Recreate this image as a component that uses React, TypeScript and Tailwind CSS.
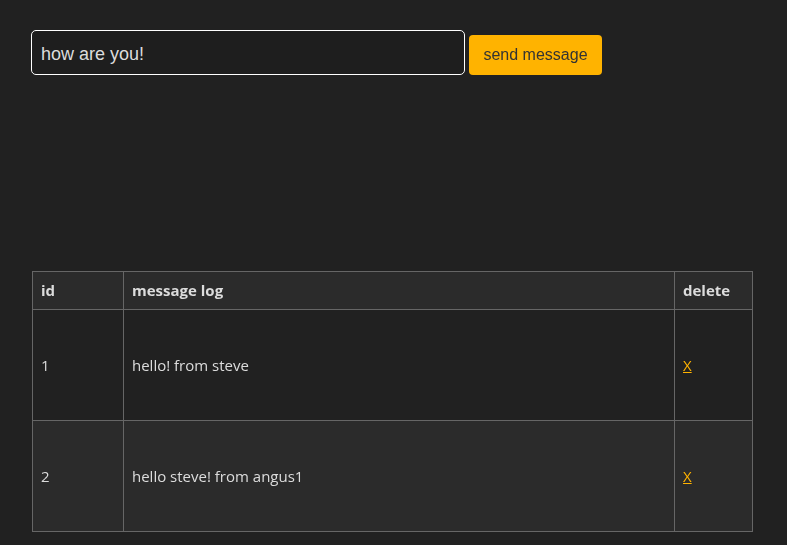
import React, { useState } from 'react';

type Message = { id: number; text: string };

const messages: Message[] = [
  { id: 1, text: 'hello! from steve' },
  { id: 2, text: 'hello steve! from angus1' },
];

export default function App() {
  const [draft, setDraft] = useState('how are you!');

  return (
    <div
      className="min-h-[545px] w-full bg-[#212121] px-8 pt-[30px]"
      style={{ fontFamily: '"Open Sans", "Noto Sans", sans-serif' }}
    >
      {/* send form */}
      <div className="-ml-px flex items-end gap-1">
        <input
          autoFocus
          value={draft}
          onChange={(e) => setDraft(e.target.value)}
          className="h-[45px] w-[434px] rounded-[5px] border border-white bg-[#1e1e1e] px-[9px] pt-[4px] text-[18px] text-[#dcdcdc] caret-white outline-none"
          style={{ fontFamily: '"Liberation Sans", Arial, sans-serif' }}
        />
        <button
          className="h-[40px] w-[133px] rounded-[4px] bg-[#ffb300] text-[16px] text-[#333]"
          style={{ fontFamily: '"Liberation Sans", Arial, sans-serif' }}
        >
          send message
        </button>
      </div>

      {/* message log */}
      <table className="mt-[196px] w-[720px] table-fixed border-collapse text-[15px] text-[#dcdcdc]">
        <colgroup>
          <col className="w-[91px]" />
          <col className="w-[551px]" />
          <col className="w-[78px]" />
        </colgroup>
        <thead>
          <tr className="h-[38px] bg-[#2b2b2b]">
            <th className="border border-[#666] px-2 text-left font-bold">id</th>
            <th className="border border-[#666] px-2 text-left font-bold">message log</th>
            <th className="border border-[#666] px-2 text-left font-bold">delete</th>
          </tr>
        </thead>
        <tbody>
          {messages.map((m, i) => (
            <tr key={m.id} className={`h-[111px] ${i % 2 === 1 ? 'bg-[#2b2b2b]' : 'bg-[#212121]'}`}>
              <td className="border border-[#666] px-2">{m.id}</td>
              <td className="border border-[#666] px-2">{m.text}</td>
              <td className="border border-[#666] px-2">
                <a href="#" className="text-[#ffb300] underline">X</a>
              </td>
            </tr>
          ))}
        </tbody>
      </table>
    </div>
  );
}
